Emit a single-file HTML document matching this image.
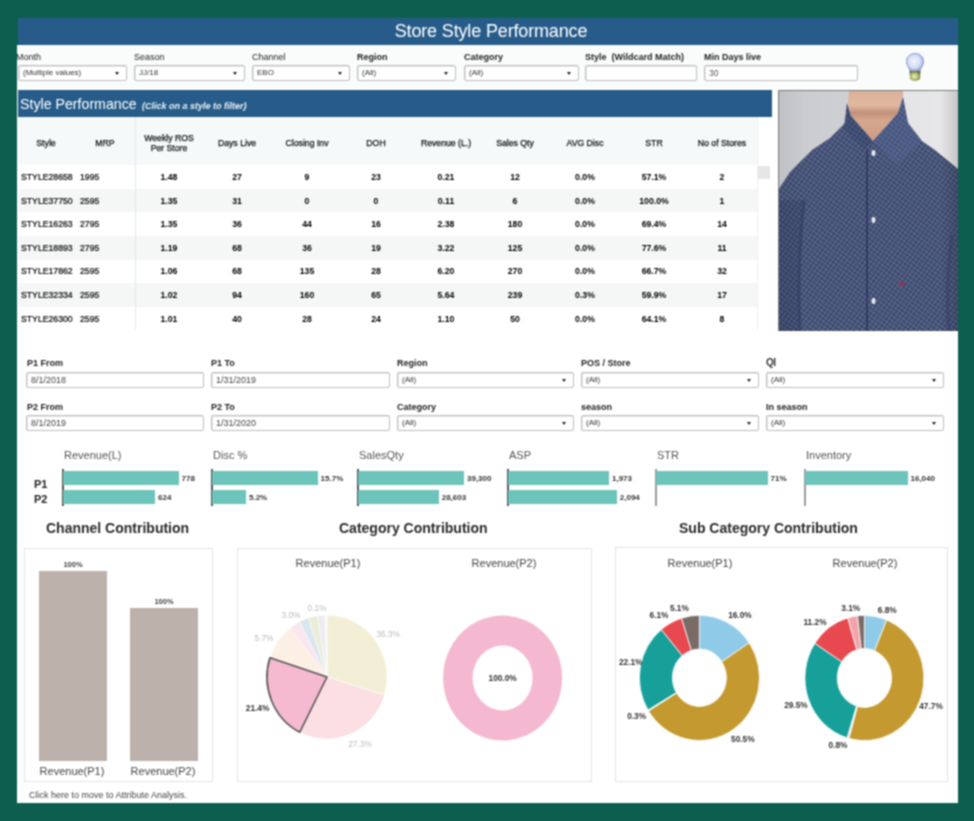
<!DOCTYPE html><html><head><meta charset="utf-8"><style>
*{margin:0;padding:0;box-sizing:border-box}
html,body{width:974px;height:821px;overflow:hidden;background:#0d5e4f;font-family:"Liberation Sans",sans-serif;color:#333}
div,span{position:absolute;white-space:nowrap}
.lbl{font-size:9px;color:#222;line-height:10px}
.b{font-weight:bold}
.dd{height:16px;border:1px solid #bdbdbd;border-radius:2px;background:#fff;font-size:8px;line-height:14px;padding-left:4px;color:#333;box-shadow:inset 1px 1px 0 #e6e6e6}
.dt{font-size:9px;color:#444}
.dd i{position:absolute;right:7px;top:5.5px;width:0;height:0;border-left:2.5px solid transparent;border-right:2.5px solid transparent;border-top:3.5px solid #222}
.th{font-size:8.7px;color:#111;-webkit-text-stroke:0.25px #111;text-align:center;line-height:10px}
.td{font-size:8.7px;color:#000;-webkit-text-stroke:0.2px #000;line-height:10px}
.tdb{font-size:8.7px;color:#000;font-weight:bold;text-align:center;line-height:10px;width:60px}
.ct{font-size:14px;font-weight:bold;color:#2a2a2a;line-height:16px}
.sub{font-size:11px;color:#444;line-height:12px;text-align:center;width:100px}
.pl{font-size:8.3px;font-weight:bold;color:#444;line-height:9px}
</style></head><body><svg width="0" height="0" style="position:absolute"><filter id="soft" x="0" y="0" width="100%" height="100%" color-interpolation-filters="sRGB"><feConvolveMatrix order="3" kernelMatrix="1 2 1 2 4 2 1 2 1" divisor="16" edgeMode="duplicate"/></filter></svg><div style="position:absolute;left:0;top:0;width:974px;height:821px;overflow:hidden;filter:url(#soft)">
<div style="left:17px;top:18px;width:941px;height:785px;background:#fff"></div>
<div style="left:18px;top:18px;width:940px;height:27px;background:#275c8a;color:#fff;font-size:18px;letter-spacing:-0.15px;line-height:27px;text-align:center;padding-left:6px">Store Style Performance</div>
<div style="left:17px;top:45px;width:941px;height:45px;background:#fafcfc"></div>
<div class="lbl" style="left:16px;top:52px;">Month</div>
<div class="dd" style="left:18px;top:65px;width:109px;height:16px">(Multiple values)<i></i></div>
<div class="lbl" style="left:134px;top:52px;">Season</div>
<div class="dd" style="left:134px;top:65px;width:111px;height:16px">JJ/18<i></i></div>
<div class="lbl" style="left:252px;top:52px;">Channel</div>
<div class="dd" style="left:252px;top:65px;width:98px;height:16px">EBO<i></i></div>
<div class="lbl b" style="left:357px;top:52px;">Region</div>
<div class="dd" style="left:357px;top:65px;width:99px;height:16px">(All)<i></i></div>
<div class="lbl b" style="left:464px;top:52px;">Category</div>
<div class="dd" style="left:464px;top:65px;width:115px;height:16px">(All)<i></i></div>
<div class="lbl b" style="left:585px;top:52px;">Style &nbsp;(Wildcard Match)</div>
<div class="dd" style="left:585px;top:65px;width:112px;height:16px"></div>
<div class="lbl b" style="left:704px;top:52px;">Min Days live</div>
<div class="dd" style="left:704px;top:65px;width:154px;height:16px"><span style="position:static;font-size:8.5px;color:#555">30</span></div>
<svg style="position:absolute;left:900px;top:48px" width="32" height="38" viewBox="900 48 32 38">
<defs><radialGradient id="bg" cx="0.45" cy="0.45" r="0.6"><stop offset="0" stop-color="#f2f6ff"/><stop offset="0.6" stop-color="#d4def5"/><stop offset="1" stop-color="#8d9bd6"/></radialGradient>
<radialGradient id="bs" cx="0.45" cy="0.55" r="0.6"><stop offset="0" stop-color="#eef4c0"/><stop offset="0.6" stop-color="#a9b46a"/><stop offset="1" stop-color="#5c6630"/></radialGradient></defs>
<path d="M915 53.5 C910 53.5 906.5 57 906.5 61.5 C906.5 65.5 909.5 68 910 71 L920 71 C920.5 68 923.5 65.5 923.5 61.5 C923.5 57 920 53.5 915 53.5Z" fill="url(#bg)" stroke="#8f9cd4" stroke-width="1"/>
<path d="M909.5 71 L920.5 71 L920 79 Q915 83 910 79Z" fill="url(#bs)"/>
</svg>
<div style="left:18px;top:90px;width:754px;height:27px;background:#275c8a"></div>
<div style="left:20px;top:96px;font-size:14.2px;color:#fff;line-height:16px">Style Performance</div>
<div style="left:142px;top:101px;font-size:9px;font-style:italic;font-weight:bold;color:#eef2f6;line-height:10px">(Click on a style to filter)</div>
<div style="left:18px;top:117px;width:739px;height:48px;background:#f5f9f9"></div>
<div style="left:135px;top:117px;width:1px;height:213px;background:#e3e8ea"></div>
<div style="left:757px;top:117px;width:1px;height:213px;background:#eef0f0"></div>
<div style="left:758px;top:166px;width:12px;height:13px;background:#e6e6e6"></div>
<div class="th" style="left:6px;top:138px;width:80px">Style</div>
<div class="th" style="left:65px;top:138px;width:80px">MRP</div>
<div class="th" style="left:129px;top:133px;width:80px">Weekly ROS<br>Per Store</div>
<div class="th" style="left:197px;top:138px;width:80px">Days Live</div>
<div class="th" style="left:267px;top:138px;width:80px">Closing Inv</div>
<div class="th" style="left:336px;top:138px;width:80px">DOH</div>
<div class="th" style="left:406px;top:138px;width:80px">Revenue (L.)</div>
<div class="th" style="left:475px;top:138px;width:80px">Sales Qty</div>
<div class="th" style="left:545px;top:138px;width:80px">AVG Disc</div>
<div class="th" style="left:614px;top:138px;width:80px">STR</div>
<div class="th" style="left:682px;top:138px;width:80px">No of Stores</div>
<div class="td" style="left:21px;top:172.0px">STYLE28658</div>
<div class="td" style="left:80px;top:172.0px">1995</div>
<div class="tdb" style="left:139px;top:172.0px">1.48</div>
<div class="tdb" style="left:207px;top:172.0px">27</div>
<div class="tdb" style="left:277px;top:172.0px">9</div>
<div class="tdb" style="left:346px;top:172.0px">23</div>
<div class="tdb" style="left:416px;top:172.0px">0.21</div>
<div class="tdb" style="left:485px;top:172.0px">12</div>
<div class="tdb" style="left:555px;top:172.0px">0.0%</div>
<div class="tdb" style="left:624px;top:172.0px">57.1%</div>
<div class="tdb" style="left:692px;top:172.0px">2</div>
<div style="left:18px;top:188.8px;width:739px;height:23.6px;background:#f5f6f6"></div>
<div class="td" style="left:21px;top:195.6px">STYLE37750</div>
<div class="td" style="left:80px;top:195.6px">2595</div>
<div class="tdb" style="left:139px;top:195.6px">1.35</div>
<div class="tdb" style="left:207px;top:195.6px">31</div>
<div class="tdb" style="left:277px;top:195.6px">0</div>
<div class="tdb" style="left:346px;top:195.6px">0</div>
<div class="tdb" style="left:416px;top:195.6px">0.11</div>
<div class="tdb" style="left:485px;top:195.6px">6</div>
<div class="tdb" style="left:555px;top:195.6px">0.0%</div>
<div class="tdb" style="left:624px;top:195.6px">100.0%</div>
<div class="tdb" style="left:692px;top:195.6px">1</div>
<div class="td" style="left:21px;top:219.2px">STYLE16263</div>
<div class="td" style="left:80px;top:219.2px">2795</div>
<div class="tdb" style="left:139px;top:219.2px">1.35</div>
<div class="tdb" style="left:207px;top:219.2px">36</div>
<div class="tdb" style="left:277px;top:219.2px">44</div>
<div class="tdb" style="left:346px;top:219.2px">16</div>
<div class="tdb" style="left:416px;top:219.2px">2.38</div>
<div class="tdb" style="left:485px;top:219.2px">180</div>
<div class="tdb" style="left:555px;top:219.2px">0.0%</div>
<div class="tdb" style="left:624px;top:219.2px">69.4%</div>
<div class="tdb" style="left:692px;top:219.2px">14</div>
<div style="left:18px;top:236.0px;width:739px;height:23.6px;background:#f5f6f6"></div>
<div class="td" style="left:21px;top:242.8px">STYLE18893</div>
<div class="td" style="left:80px;top:242.8px">2795</div>
<div class="tdb" style="left:139px;top:242.8px">1.19</div>
<div class="tdb" style="left:207px;top:242.8px">68</div>
<div class="tdb" style="left:277px;top:242.8px">36</div>
<div class="tdb" style="left:346px;top:242.8px">19</div>
<div class="tdb" style="left:416px;top:242.8px">3.22</div>
<div class="tdb" style="left:485px;top:242.8px">125</div>
<div class="tdb" style="left:555px;top:242.8px">0.0%</div>
<div class="tdb" style="left:624px;top:242.8px">77.6%</div>
<div class="tdb" style="left:692px;top:242.8px">11</div>
<div class="td" style="left:21px;top:266.4px">STYLE17862</div>
<div class="td" style="left:80px;top:266.4px">2595</div>
<div class="tdb" style="left:139px;top:266.4px">1.06</div>
<div class="tdb" style="left:207px;top:266.4px">68</div>
<div class="tdb" style="left:277px;top:266.4px">135</div>
<div class="tdb" style="left:346px;top:266.4px">28</div>
<div class="tdb" style="left:416px;top:266.4px">6.20</div>
<div class="tdb" style="left:485px;top:266.4px">270</div>
<div class="tdb" style="left:555px;top:266.4px">0.0%</div>
<div class="tdb" style="left:624px;top:266.4px">66.7%</div>
<div class="tdb" style="left:692px;top:266.4px">32</div>
<div style="left:18px;top:283.2px;width:739px;height:23.6px;background:#f5f6f6"></div>
<div class="td" style="left:21px;top:290.0px">STYLE32334</div>
<div class="td" style="left:80px;top:290.0px">2595</div>
<div class="tdb" style="left:139px;top:290.0px">1.02</div>
<div class="tdb" style="left:207px;top:290.0px">94</div>
<div class="tdb" style="left:277px;top:290.0px">160</div>
<div class="tdb" style="left:346px;top:290.0px">65</div>
<div class="tdb" style="left:416px;top:290.0px">5.64</div>
<div class="tdb" style="left:485px;top:290.0px">239</div>
<div class="tdb" style="left:555px;top:290.0px">0.3%</div>
<div class="tdb" style="left:624px;top:290.0px">59.9%</div>
<div class="tdb" style="left:692px;top:290.0px">17</div>
<div class="td" style="left:21px;top:313.6px">STYLE26300</div>
<div class="td" style="left:80px;top:313.6px">2595</div>
<div class="tdb" style="left:139px;top:313.6px">1.01</div>
<div class="tdb" style="left:207px;top:313.6px">40</div>
<div class="tdb" style="left:277px;top:313.6px">28</div>
<div class="tdb" style="left:346px;top:313.6px">24</div>
<div class="tdb" style="left:416px;top:313.6px">1.10</div>
<div class="tdb" style="left:485px;top:313.6px">50</div>
<div class="tdb" style="left:555px;top:313.6px">0.0%</div>
<div class="tdb" style="left:624px;top:313.6px">64.1%</div>
<div class="tdb" style="left:692px;top:313.6px">8</div>
<div style="left:135px;top:117px;width:1px;height:213px;background:#e3e8ea"></div>
<svg style="position:absolute;left:778px;top:90px" width="180" height="241" viewBox="778 90 180 241">
<defs><linearGradient id="pbg" x1="0" x2="1" y1="0" y2="0"><stop offset="0" stop-color="#c9cacd"/><stop offset="0.4" stop-color="#cfd0d3"/><stop offset="0.7" stop-color="#e4e4e6"/><stop offset="1" stop-color="#e9e9eb"/></linearGradient>
<linearGradient id="skin" x1="0" x2="0" y1="0" y2="1"><stop offset="0" stop-color="#d9b098"/><stop offset="0.3" stop-color="#e0b89f"/><stop offset="0.45" stop-color="#c29079"/><stop offset="0.6" stop-color="#d6a88e"/><stop offset="1" stop-color="#cc9c83"/></linearGradient>
<linearGradient id="shade" x1="0" x2="1" y1="0" y2="0"><stop offset="0" stop-color="#000" stop-opacity="0.05"/><stop offset="0.15" stop-color="#000" stop-opacity="0"/><stop offset="0.9" stop-color="#000" stop-opacity="0"/><stop offset="1" stop-color="#000" stop-opacity="0.15"/></linearGradient>
<pattern id="dots" width="4" height="4" patternUnits="userSpaceOnUse" patternTransform="rotate(35)"><rect width="4" height="4" fill="#48567b"/><circle cx="1" cy="1" r="0.9" fill="#343f5f"/><circle cx="3" cy="3" r="0.7" fill="#7e8aa8"/></pattern></defs>
<rect x="778" y="90" width="180" height="241" fill="url(#pbg)"/>
<path d="M849 90 L903 90 L903 97 L898 113 L873 141 L851 116 L848 103Z" fill="url(#skin)"/>
<path d="M778 331 L778 190 L790 172 L812 150 L830 138 L845 123 L847 103 L851 116 L873 141 L898 113 L903 97 L908 123 L922 141 L935 150 L958 169 L958 331Z" fill="url(#dots)"/>
<rect x="778" y="90" width="180" height="241" fill="url(#shade)"/>
<path d="M903 97 L908 123 L922 141 L897 165 L873 141 L898 113Z" fill="#5a6b9c" opacity="0.35"/>
<path d="M847 103 L851 116 L873 141 L864 150 L843 128Z" fill="#2f3b63" opacity="0.3"/>
<path d="M867 150 L867 331" stroke="#283458" stroke-width="1.5"/>
<path d="M778 200 L804 200 Q797 265 800 331 L778 331Z" fill="#1e2848" opacity="0.18"/><path d="M804 200 Q797 265 800 331" stroke="#2f3b63" stroke-width="3" fill="none" opacity="0.6"/>
<path d="M952 235 Q945 290 949 331" stroke="#2f3b63" stroke-width="3" fill="none" opacity="0.5"/>
<ellipse cx="873.5" cy="153" rx="2" ry="3" fill="#e6eaf0"/>
<ellipse cx="873.5" cy="220" rx="2" ry="3" fill="#e6eaf0"/>
<ellipse cx="873.5" cy="301" rx="2" ry="3" fill="#e6eaf0"/>
<rect x="900" y="282" width="4" height="4" fill="#9a3050"/>
<path d="M778.5 331 L778.5 90.5 L958 90.5" stroke="#7a7a7a" stroke-width="1" fill="none"/>
</svg>
<div class="lbl b" style="left:27px;top:358px;">P1 From</div>
<div class="dd dt" style="left:26px;top:372px;width:178px;height:16px">8/1/2018</div>
<div class="lbl b" style="left:211px;top:358px;">P1 To</div>
<div class="dd dt" style="left:211px;top:372px;width:179px;height:16px">1/31/2019</div>
<div class="lbl b" style="left:397px;top:358px;">Region</div>
<div class="dd" style="left:397px;top:372px;width:177px;height:16px">(All)<i></i></div>
<div class="lbl b" style="left:581px;top:358px;">POS / Store</div>
<div class="dd" style="left:581px;top:372px;width:178px;height:16px">(All)<i></i></div>
<div class="lbl b" style="left:766px;top:358px;"><span style="position:static;font-size:10px;font-weight:bold;color:#333;letter-spacing:-0.5px">QI</span></div>
<div class="dd" style="left:766px;top:372px;width:178px;height:16px">(All)<i></i></div>
<div class="lbl b" style="left:27px;top:402px;">P2 From</div>
<div class="dd dt" style="left:26px;top:415px;width:178px;height:16px">8/1/2019</div>
<div class="lbl b" style="left:211px;top:402px;">P2 To</div>
<div class="dd dt" style="left:211px;top:415px;width:179px;height:16px">1/31/2020</div>
<div class="lbl b" style="left:397px;top:402px;">Category</div>
<div class="dd" style="left:397px;top:415px;width:177px;height:16px">(All)<i></i></div>
<div class="lbl b" style="left:581px;top:402px;">season</div>
<div class="dd" style="left:581px;top:415px;width:178px;height:16px">(All)<i></i></div>
<div class="lbl b" style="left:766px;top:402px;">In season</div>
<div class="dd" style="left:766px;top:415px;width:178px;height:16px">(All)<i></i></div>
<div style="left:64px;top:449px;font-size:11px;color:#555;line-height:12px">Revenue(L)</div>
<div style="left:62px;top:469px;width:1.5px;height:37px;background:#555"></div>
<div style="left:63px;top:471px;width:115.6px;height:14px;background:#6cc4ba"></div>
<div class="pl" style="left:181.6px;top:473.5px;font-size:8px;color:#333">778</div>
<div style="left:63px;top:490px;width:92.0px;height:14px;background:#6cc4ba"></div>
<div class="pl" style="left:158.0px;top:492.5px;font-size:8px;color:#333">624</div>
<div style="left:213px;top:449px;font-size:11px;color:#555;line-height:12px">Disc %</div>
<div style="left:211px;top:469px;width:1.5px;height:37px;background:#555"></div>
<div style="left:212px;top:471px;width:105.6px;height:14px;background:#6cc4ba"></div>
<div class="pl" style="left:320.6px;top:473.5px;font-size:8px;color:#333">15.7%</div>
<div style="left:212px;top:490px;width:34.0px;height:14px;background:#6cc4ba"></div>
<div class="pl" style="left:249.0px;top:492.5px;font-size:8px;color:#333">5.2%</div>
<div style="left:359px;top:449px;font-size:11px;color:#555;line-height:12px">SalesQty</div>
<div style="left:357px;top:469px;width:1.5px;height:37px;background:#555"></div>
<div style="left:358px;top:471px;width:106.0px;height:14px;background:#6cc4ba"></div>
<div class="pl" style="left:467.0px;top:473.5px;font-size:8px;color:#333">39,300</div>
<div style="left:358px;top:490px;width:80.7px;height:14px;background:#6cc4ba"></div>
<div class="pl" style="left:441.7px;top:492.5px;font-size:8px;color:#333">28,603</div>
<div style="left:509px;top:449px;font-size:11px;color:#555;line-height:12px">ASP</div>
<div style="left:507px;top:469px;width:1.5px;height:37px;background:#555"></div>
<div style="left:508px;top:471px;width:101.0px;height:14px;background:#6cc4ba"></div>
<div class="pl" style="left:612.0px;top:473.5px;font-size:8px;color:#333">1,973</div>
<div style="left:508px;top:490px;width:108.8px;height:14px;background:#6cc4ba"></div>
<div class="pl" style="left:619.8px;top:492.5px;font-size:8px;color:#333">2,094</div>
<div style="left:657px;top:449px;font-size:11px;color:#555;line-height:12px">STR</div>
<div style="left:655px;top:469px;width:1.5px;height:37px;background:#9a9a9a"></div>
<div style="left:656px;top:471px;width:111.5px;height:14px;background:#6cc4ba"></div>
<div class="pl" style="left:770.5px;top:473.5px;font-size:8px;color:#333">71%</div>
<div style="left:806px;top:449px;font-size:11px;color:#555;line-height:12px">Inventory</div>
<div style="left:804px;top:469px;width:1.5px;height:37px;background:#9a9a9a"></div>
<div style="left:805px;top:471px;width:102.5px;height:14px;background:#6cc4ba"></div>
<div class="pl" style="left:910.5px;top:473.5px;font-size:8px;color:#333">16,040</div>
<div style="left:34px;top:478px;font-size:11px;font-weight:bold;color:#222;line-height:12px">P1</div>
<div style="left:34px;top:493px;font-size:11px;font-weight:bold;color:#222;line-height:12px">P2</div>
<div class="ct" style="left:46px;top:520px">Channel Contribution</div>
<div class="ct" style="left:339px;top:520px">Category Contribution</div>
<div class="ct" style="left:679px;top:520px">Sub Category Contribution</div>
<div style="left:24px;top:548px;width:189px;height:234px;border:1px solid #e3e3e3"></div>
<div style="left:237px;top:548px;width:355px;height:234px;border:1px solid #e3e3e3"></div>
<div style="left:615px;top:547px;width:333px;height:235px;border:1px solid #e3e3e3"></div>
<div style="left:39px;top:571px;width:68px;height:190px;background:#bcb1ab"></div>
<div style="left:130px;top:608px;width:68px;height:153px;background:#bcb1ab"></div>
<div class="pl" style="left:43px;top:560px;width:60px;text-align:center;font-size:7.5px">100%</div>
<div class="pl" style="left:134px;top:597px;width:60px;text-align:center;font-size:7.5px">100%</div>
<div class="sub" style="left:22px;top:765px">Revenue(P1)</div>
<div class="sub" style="left:113px;top:765px">Revenue(P2)</div>
<div style="left:29px;top:790px;font-size:9px;color:#444;line-height:10px">Click here to move to Attribute Analysis.</div>
<div class="sub" style="left:278px;top:557px">Revenue(P1)</div>
<div class="sub" style="left:454px;top:557px">Revenue(P2)</div>
<div class="sub" style="left:650px;top:557px">Revenue(P1)</div>
<div class="sub" style="left:815px;top:557px">Revenue(P2)</div>
<svg style="position:absolute;left:0;top:0" width="974" height="821">
<path d="M327.00 677.00 L327.00 615.00 A60.00 62.00 0 0 1 384.38 695.13 Z" fill="#f3efd6" stroke="#fff" stroke-width="0.5"/>
<path d="M327.00 677.00 L384.38 695.13 A60.00 62.00 0 0 1 299.76 732.24 Z" fill="#fbdfe2" stroke="#fff" stroke-width="0.5"/>
<path d="M327.00 677.00 L299.76 732.24 A60.00 62.00 0 0 1 269.94 657.84 Z" fill="#f5b9d0" stroke="#fff" stroke-width="0.5"/>
<path d="M327.00 677.00 L269.94 657.84 A60.00 62.00 0 0 1 290.06 628.14 Z" fill="#fcefe3" stroke="#fff" stroke-width="0.5"/>
<path d="M327.00 677.00 L290.06 628.14 A60.00 62.00 0 0 1 299.76 621.76 Z" fill="#f9e6ee" stroke="#fff" stroke-width="0.5"/>
<path d="M327.00 677.00 L299.76 621.76 A60.00 62.00 0 0 1 308.46 618.03 Z" fill="#d9e6ec" stroke="#fff" stroke-width="0.5"/>
<path d="M327.00 677.00 L308.46 618.03 A60.00 62.00 0 0 1 317.61 615.76 Z" fill="#e9eedb" stroke="#fff" stroke-width="0.5"/>
<path d="M327.00 677.00 L317.61 615.76 A60.00 62.00 0 0 1 324.91 615.04 Z" fill="#efeaf2" stroke="#fff" stroke-width="0.5"/>
<path d="M327.00 677.00 L324.91 615.04 A60.00 62.00 0 0 1 327.00 615.00 Z" fill="#f8f8f4" stroke="#fff" stroke-width="0.5"/>
<path d="M327.00 677.00 L299.76 732.24 A60.00 62.00 0 0 1 269.94 657.84 Z" fill="none" stroke="#555" stroke-width="1.6" stroke-linejoin="round"/>
<ellipse cx="502.6" cy="678" rx="59.5" ry="62.5" fill="#f4b9d0"/>
<ellipse cx="502.6" cy="678" rx="30" ry="32.5" fill="#fff"/>
<path d="M699.40 615.30 A60.00 62.50 0 0 1 749.14 642.85 L721.78 661.75 A27.00 28.70 0 0 0 699.40 649.10 Z" fill="#8fcbe8" stroke="#fff" stroke-width="0.8"/>
<path d="M749.14 642.85 A60.00 62.50 0 1 1 648.52 710.92 L676.50 693.01 A27.00 28.70 0 1 0 721.78 661.75 Z" fill="#c4992f" stroke="#fff" stroke-width="0.8"/>
<path d="M648.52 710.92 A60.00 62.50 0 0 1 647.97 709.99 L676.26 692.58 A27.00 28.70 0 0 0 676.50 693.01 Z" fill="#ddd" stroke="#fff" stroke-width="0.8"/>
<path d="M647.97 709.99 A60.00 62.50 0 0 1 661.32 629.50 L682.26 655.62 A27.00 28.70 0 0 0 676.26 692.58 Z" fill="#17a09a" stroke="#fff" stroke-width="0.8"/>
<path d="M661.32 629.50 A60.00 62.50 0 0 1 681.56 618.13 L691.37 650.40 A27.00 28.70 0 0 0 682.26 655.62 Z" fill="#e8484f" stroke="#fff" stroke-width="0.8"/>
<path d="M681.56 618.13 A60.00 62.50 0 0 1 699.40 615.30 L699.40 649.10 A27.00 28.70 0 0 0 691.37 650.40 Z" fill="#7a6b67" stroke="#fff" stroke-width="0.8"/>
<path d="M864.40 615.40 A59.50 62.60 0 0 1 886.69 619.96 L874.59 650.74 A27.20 29.40 0 0 0 864.40 648.60 Z" fill="#8fcbe8" stroke="#fff" stroke-width="0.8"/>
<path d="M886.69 619.96 A59.50 62.60 0 0 1 849.00 738.47 L857.36 706.40 A27.20 29.40 0 0 0 874.59 650.74 Z" fill="#c4992f" stroke="#fff" stroke-width="0.8"/>
<path d="M849.00 738.47 A59.50 62.60 0 0 1 847.00 737.86 L856.45 706.12 A27.20 29.40 0 0 0 857.36 706.40 Z" fill="#ddd" stroke="#fff" stroke-width="0.8"/>
<path d="M847.00 737.86 A59.50 62.60 0 0 1 814.84 643.36 L841.74 661.73 A27.20 29.40 0 0 0 856.45 706.12 Z" fill="#17a09a" stroke="#fff" stroke-width="0.8"/>
<path d="M814.84 643.36 A59.50 62.60 0 0 1 847.80 617.89 L856.81 649.77 A27.20 29.40 0 0 0 841.74 661.73 Z" fill="#e8484f" stroke="#fff" stroke-width="0.8"/>
<path d="M847.80 617.89 A59.50 62.60 0 0 1 857.46 615.83 L861.23 648.80 A27.20 29.40 0 0 0 856.81 649.77 Z" fill="#f2a3aa" stroke="#fff" stroke-width="0.8"/>
<path d="M857.46 615.83 A59.50 62.60 0 0 1 864.40 615.40 L864.40 648.60 A27.20 29.40 0 0 0 861.23 648.80 Z" fill="#7a6b67" stroke="#fff" stroke-width="0.8"/>
</svg>
<div class="pl" style="left:368.0px;top:630.0px;width:40px;text-align:center;color:#bbb;font-weight:normal">36.3%</div>
<div class="pl" style="left:340.0px;top:739.5px;width:40px;text-align:center;color:#bbb;font-weight:normal">27.3%</div>
<div class="pl" style="left:237.6px;top:703.5px;width:40px;text-align:center;color:#333;">21.4%</div>
<div class="pl" style="left:244.0px;top:634.1px;width:40px;text-align:center;color:#bbb;font-weight:normal">5.7%</div>
<div class="pl" style="left:271.0px;top:610.5px;width:40px;text-align:center;color:#bbb;font-weight:normal">3.0%</div>
<div class="pl" style="left:297.0px;top:604.1px;width:40px;text-align:center;color:#bbb;font-weight:normal">0.1%</div>
<div class="pl" style="left:482.6px;top:673.5px;width:40px;text-align:center;color:#333;">100.0%</div>
<div class="pl" style="left:719.9px;top:611.0px;width:40px;text-align:center;color:#333;">16.0%</div>
<div class="pl" style="left:659.4px;top:604.1px;width:40px;text-align:center;color:#333;">5.1%</div>
<div class="pl" style="left:639.0px;top:611.0px;width:40px;text-align:center;color:#333;">6.1%</div>
<div class="pl" style="left:610.7px;top:657.7px;width:40px;text-align:center;color:#333;">22.1%</div>
<div class="pl" style="left:616.6px;top:712.3px;width:40px;text-align:center;color:#333;">0.3%</div>
<div class="pl" style="left:722.8px;top:734.7px;width:40px;text-align:center;color:#333;">50.5%</div>
<div class="pl" style="left:867.3px;top:605.5px;width:40px;text-align:center;color:#333;">6.8%</div>
<div class="pl" style="left:830.7px;top:603.7px;width:40px;text-align:center;color:#333;">3.1%</div>
<div class="pl" style="left:795.0px;top:617.5px;width:40px;text-align:center;color:#333;">11.2%</div>
<div class="pl" style="left:775.9px;top:701.4px;width:40px;text-align:center;color:#333;">29.5%</div>
<div class="pl" style="left:911.0px;top:701.5px;width:40px;text-align:center;color:#333;">47.7%</div>
<div class="pl" style="left:818.0px;top:740.5px;width:40px;text-align:center;color:#333;">0.8%</div>
<div style="left:0;top:0;width:974px;height:18px;background:#0d5e4f"></div>
<div style="left:0;top:0;width:17px;height:821px;background:#0d5e4f"></div>
<div style="left:17px;top:18px;width:1px;height:27px;background:#0d5e4f"></div>
<div style="left:958px;top:0;width:16px;height:821px;background:#0d5e4f"></div>
<div style="left:0;top:803px;width:974px;height:18px;background:#0d5e4f"></div>
</div></body></html>
